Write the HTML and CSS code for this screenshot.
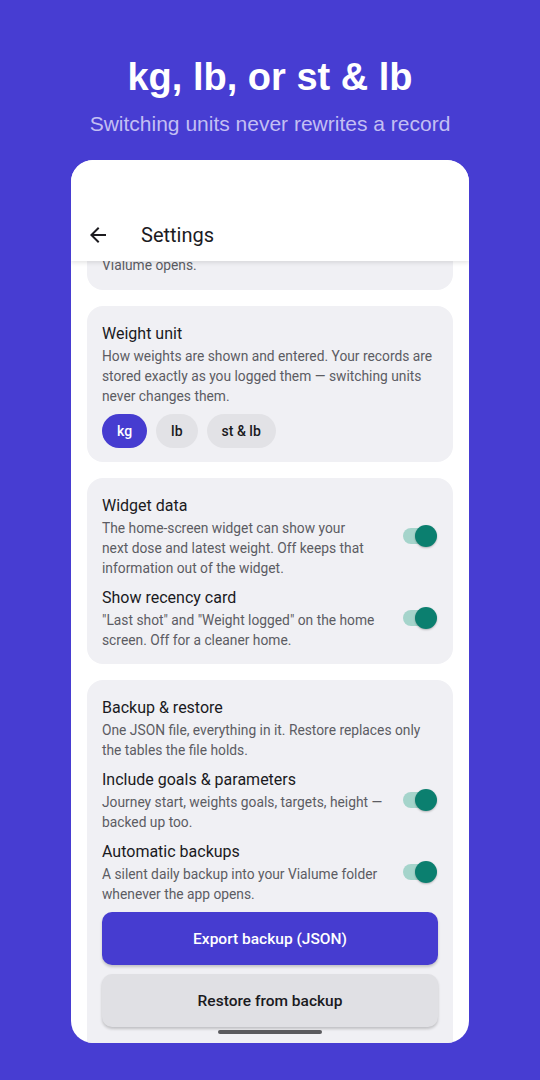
FILE: index.html
```html
<!DOCTYPE html>
<html lang="en">
<head>
<meta charset="utf-8">
<title>Settings</title>
<link rel="stylesheet" href="styles.css">
</head>
<body>
<div class="stage">
  <header class="promo">
    <h1 class="promo-title">kg, lb, or st &amp; lb</h1>
    <p class="promo-sub">Switching units never rewrites a record</p>
  </header>
  <div class="phone">
    <div class="appbar">
      <svg class="back" viewBox="0 0 24 24" width="24" height="24"><path d="M20 11H7.83l5.59-5.59L12 4l-8 8 8 8 1.41-1.41L7.83 13H20v-2z" fill="#1c1b1f"/></svg>
      <span class="appbar-title">Settings</span>
    </div>
    <div class="content">
      <section class="card card-clipped">
        <p class="desc">Vialume opens.</p>
      </section>
      <section class="card">
        <h2 class="title">Weight unit</h2>
        <p class="desc">How weights are shown and entered. Your records are stored exactly as you logged them — switching units never changes them.</p>
        <div class="chips">
          <span class="chip chip-on">kg</span>
          <span class="chip">lb</span>
          <span class="chip">st &amp; lb</span>
        </div>
      </section>
      <section class="card">
        <div class="row">
          <div class="row-text">
            <h2 class="title">Widget data</h2>
            <p class="desc">The home-screen widget can show your<br>next dose and latest weight. Off keeps that information out of the widget.</p>
          </div>
          <span class="toggle"><span class="thumb"></span></span>
        </div>
        <div class="row">
          <div class="row-text">
            <h2 class="title">Show recency card</h2>
            <p class="desc">"Last shot" and "Weight logged" on the home screen. Off for a cleaner home.</p>
          </div>
          <span class="toggle"><span class="thumb"></span></span>
        </div>
      </section>
      <section class="card">
        <h2 class="title">Backup &amp; restore</h2>
        <p class="desc">One JSON file, everything in it. Restore replaces only the tables the file holds.</p>
        <div class="row">
          <div class="row-text">
            <h2 class="title">Include goals &amp; parameters</h2>
            <p class="desc">Journey start, weights goals, targets, height — backed up too.</p>
          </div>
          <span class="toggle"><span class="thumb"></span></span>
        </div>
        <div class="row">
          <div class="row-text">
            <h2 class="title">Automatic backups</h2>
            <p class="desc">A silent daily backup into your Vialume folder whenever the app opens.</p>
          </div>
          <span class="toggle"><span class="thumb"></span></span>
        </div>
        <button class="btn btn-primary">Export backup (JSON)</button>
        <button class="btn btn-secondary">Restore from backup</button>
        <div class="spacer"></div>
      </section>
    </div>
    <div class="home-bar"></div>
  </div>
</div>
</body>
</html>
```

FILE: styles.css
```css
* { box-sizing: border-box; }
html, body { margin: 0; padding: 0; }
body {
  width: 540px;
  height: 1080px;
  overflow: hidden;
  background: #473dd2;
  font-family: Roboto, "Noto Sans", sans-serif;
}
.stage {
  display: flex;
  flex-direction: column;
  align-items: center;
}
.promo {
  display: flex;
  flex-direction: column;
  align-items: center;
  padding-top: 54px;
}
.promo-title {
  margin: 0;
  font-family: "Liberation Sans", Arial, sans-serif;
  font-weight: 700;
  font-size: 38px;
  line-height: 46px;
  color: #ffffff;
}
.promo-sub {
  margin: 0;
  font-family: "Liberation Sans", Arial, sans-serif;
  font-size: 21px;
  line-height: 48px;
  color: #c3bff3;
}
.phone {
  position: relative;
  margin-top: 12px;
  width: 398px;
  height: 883px;
  background: #ffffff;
  border-radius: 22px;
  overflow: hidden;
}
.appbar {
  position: absolute;
  top: 0;
  left: 0;
  right: 0;
  height: 101px;
  background: #ffffff;
  display: flex;
  align-items: flex-end;
  padding: 0 0 14px 15px;
  box-shadow: 0 2px 4px rgba(0,0,0,0.10);
  z-index: 2;
}
.back { display: block; }
.appbar-title {
  margin-left: 31px;
  font-size: 20px;
  line-height: 24px;
  color: #1c1b1f;
}
.content {
  display: flex;
  flex-direction: column;
  gap: 16px;
  padding: 59px 16px 0;
}
.card {
  background: #f0f0f4;
  border-radius: 16px;
  padding: 16px 15px 14px;
}
.card-clipped { padding-top: 36px; padding-bottom: 15px; }
.title {
  margin: 0;
  font-size: 16px;
  line-height: 23px;
  font-weight: 400;
  color: #1a1a1e;
}
.desc {
  margin: 1px 0 0;
  font-size: 13.8px;
  line-height: 20px;
  color: #5c5c63;
}
.card > .desc:first-child { margin-top: 0; }
.chips {
  display: flex;
  gap: 9px;
  margin-top: 8px;
}
.chip {
  height: 34px;
  padding: 0 15px;
  border-radius: 17px;
  background: #e2e2e6;
  color: #1a1a1e;
  font-size: 14px;
  font-weight: 500;
  display: flex;
  align-items: center;
}
.chip-on {
  background: #463cd0;
  color: #ffffff;
}
.row {
  display: flex;
  align-items: center;
  gap: 6px;
}
.row + .row, .desc + .row { margin-top: 8px; }
.row-text { flex: 1; min-width: 0; }
.toggle {
  position: relative;
  flex: 0 0 auto;
  width: 32px;
  height: 16px;
  margin-right: 3px;
  border-radius: 8px;
  background: #a5d4cb;
}
.thumb {
  position: absolute;
  right: -2px;
  top: -3px;
  width: 22px;
  height: 22px;
  border-radius: 50%;
  background: #0b7f6f;
  box-shadow: 0 1px 2px rgba(0,0,0,0.25);
}
.btn {
  display: block;
  width: 100%;
  height: 53px;
  border: 0;
  border-radius: 10px;
  font-family: Roboto, "Noto Sans", sans-serif;
  font-size: 15.5px;
  font-weight: 500;
  box-shadow: 0 2px 3px rgba(0,0,0,0.2);
}
.btn-primary {
  margin-top: 8px;
  background: #463cd0;
  color: #ffffff;
}
.btn-secondary {
  margin-top: 9px;
  background: #e0e0e4;
  color: #1a1a1e;
}
.spacer { height: 40px; }
.home-bar {
  position: absolute;
  left: 147px;
  bottom: 9px;
  width: 104px;
  height: 4px;
  border-radius: 2px;
  background: #5a5a5e;
}
```
